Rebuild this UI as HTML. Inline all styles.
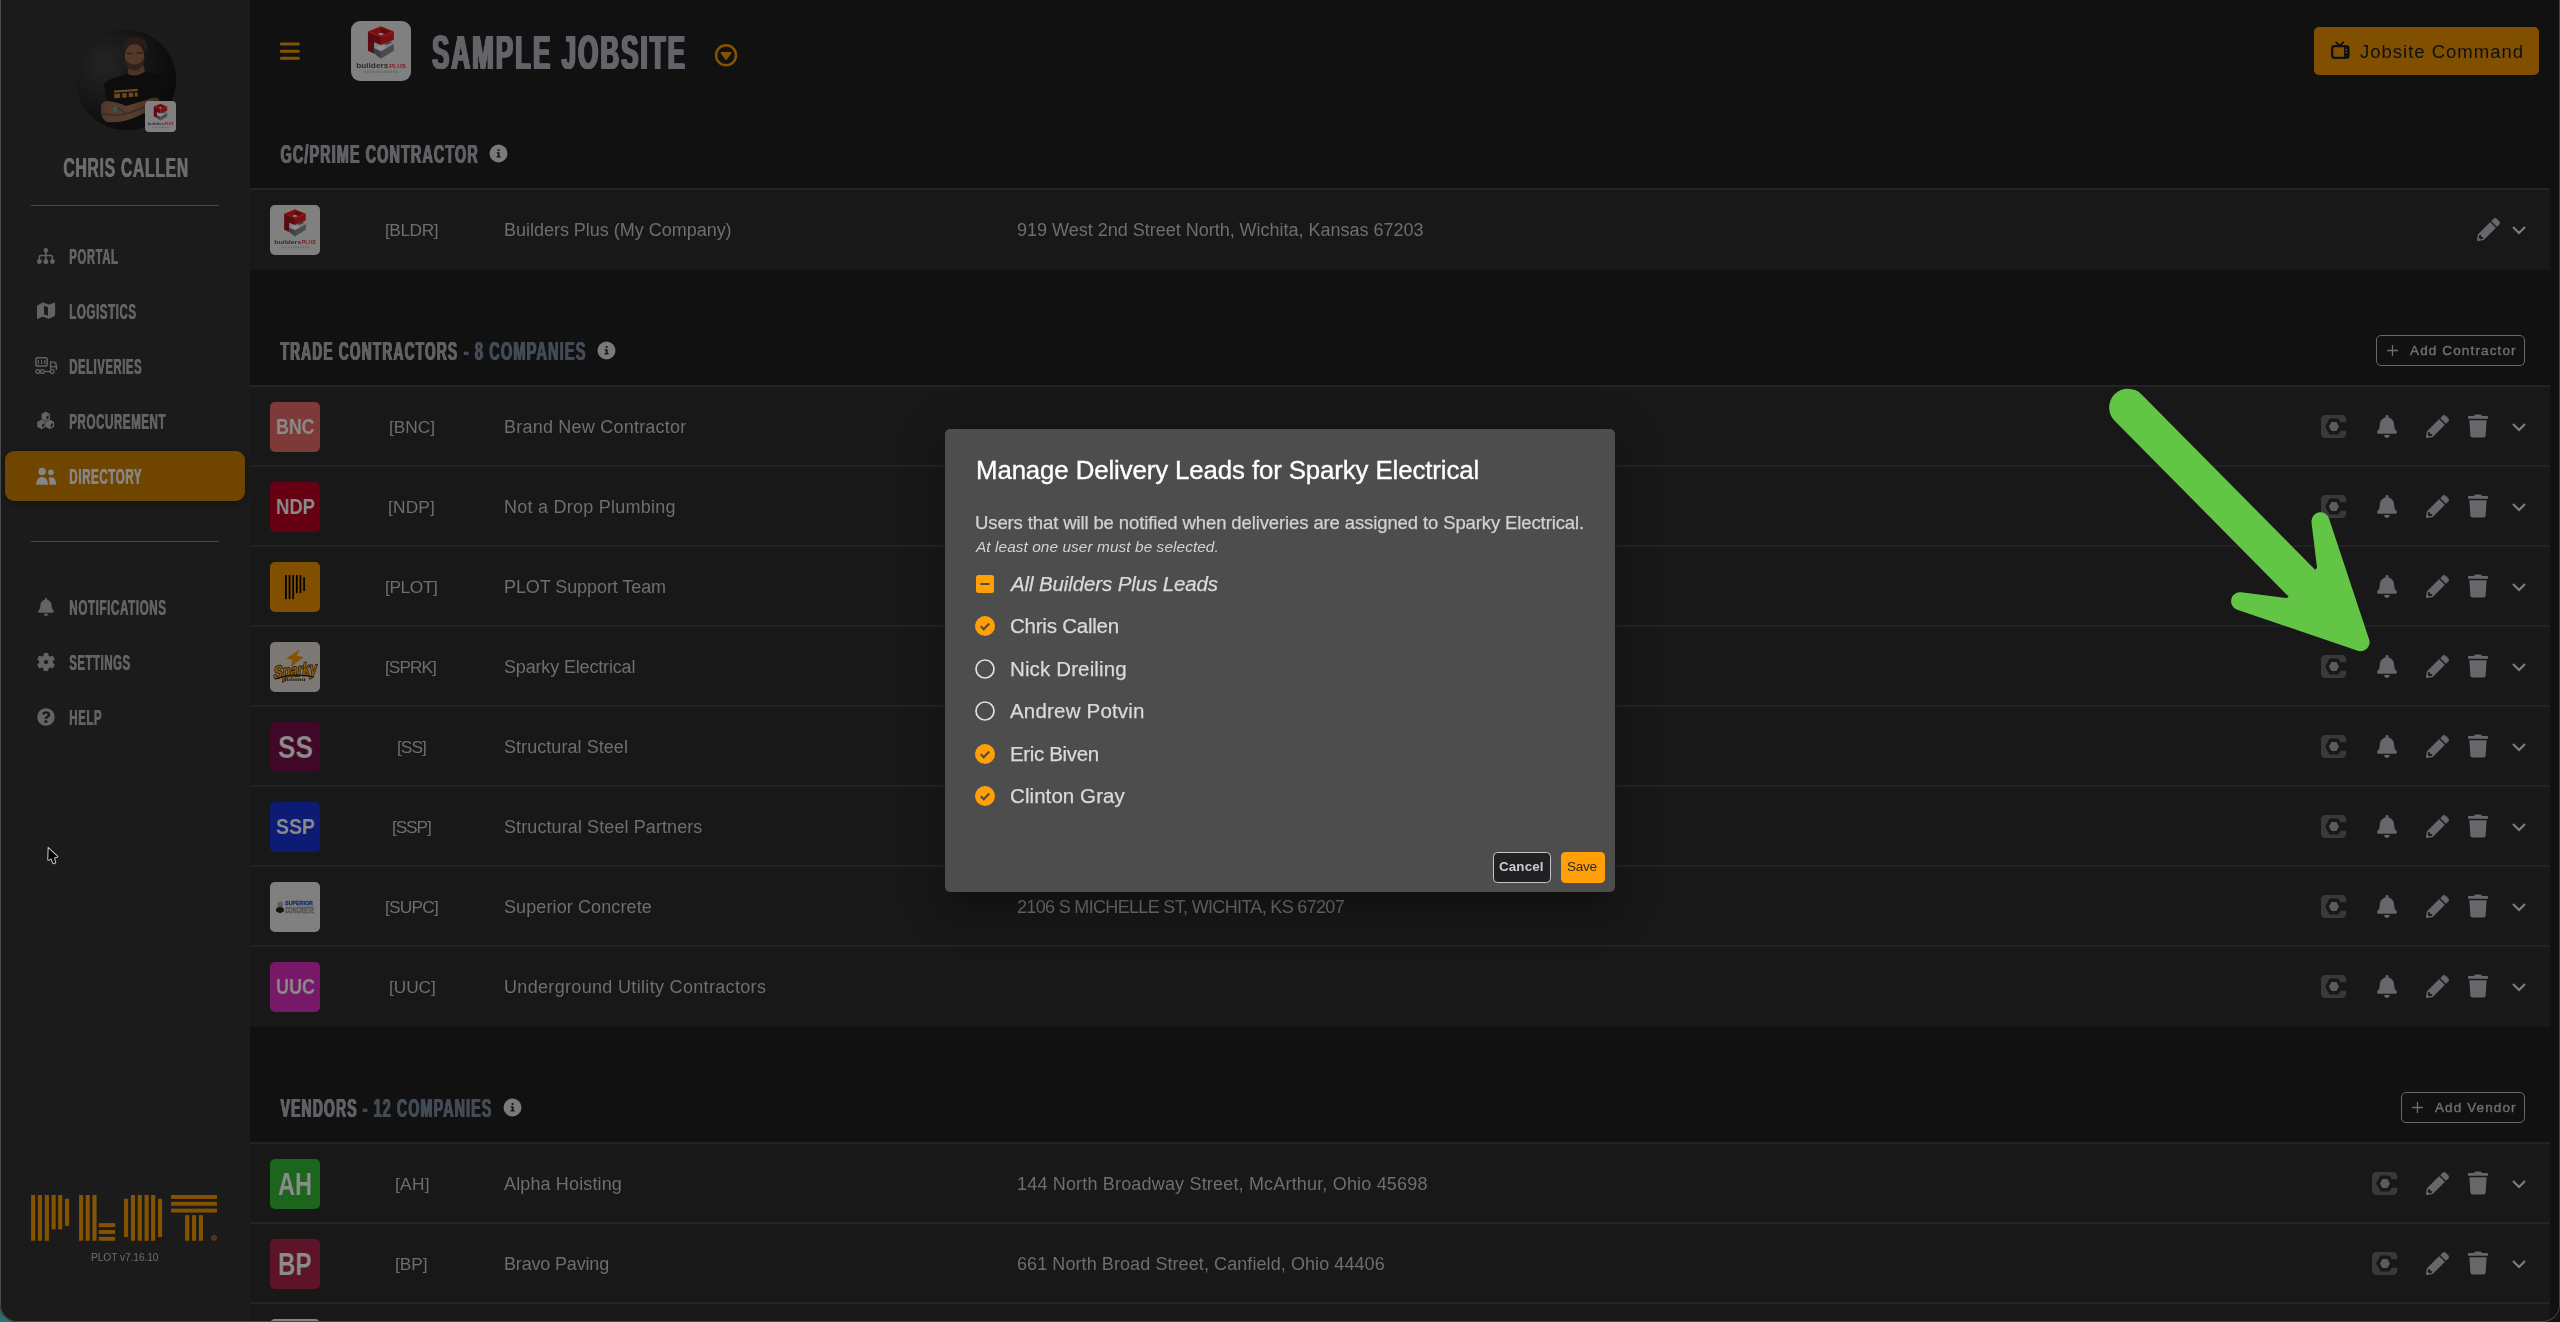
<!DOCTYPE html><html><head><meta charset="utf-8"><title>Directory</title><style>html,body{margin:0;padding:0;background:#0d1413;}body{width:2560px;height:1322px;position:relative;overflow:hidden;font-family:"Liberation Sans",sans-serif;}</style></head><body>
<div style="position:absolute;left:0;top:1296px;width:26px;height:26px;background:linear-gradient(160deg,#3a6f6a 0%,#2a6a6c 45%,#2f7a7f 100%)"></div><div style="position:absolute;left:0;top:0;width:2560px;height:1322px;border-radius:0 0 17px 17px;overflow:hidden;background:#111">
<div style="position:absolute;left:0;top:0;width:250px;height:1322px;background:#1b1b1b"></div>
<div id="avatar" style="position:absolute;left:75.500px;top:30px;width:100px;height:100px;border-radius:50%;overflow:hidden;background:#0d0d0d"><svg width="100" height="100" viewBox="0 0 100 100" style="position:absolute;left:0;top:0"><defs><radialGradient id="avbg" cx="0.28" cy="0.34" r="0.75"><stop offset="0" stop-color="#242424"/><stop offset="0.45" stop-color="#181818"/><stop offset="1" stop-color="#0a0a0a"/></radialGradient><filter id="avbl" x="-10%" y="-10%" width="120%" height="120%"><feGaussianBlur stdDeviation="0.700"/></filter><linearGradient id="avarm" x1="0" y1="0" x2="1" y2="0"><stop offset="0" stop-color="#4f382b"/><stop offset="0.5" stop-color="#5a3f30"/><stop offset="1" stop-color="#3f2c22"/></linearGradient></defs><rect width="100" height="100" fill="url(#avbg)"/><g filter="url(#avbl)"><path d="M28 54 Q30 50 40 47.500 L52 43.500 Q60 47.500 69.500 41 L82 45 Q88 47 88.500 54 L86 70 L80 100 L30 100 L31 72 Z" fill="#0c0c0c"/><path d="M52.500 34 L66.500 33 L69 41.500 Q60 48 52 44 Z" fill="#4b3529"/><ellipse cx="58.500" cy="26.500" rx="9.800" ry="13" fill="#56392c"/><path d="M48.800 28 Q50 40.500 59 40.500 Q67.500 40 68.600 27 Q66 34 59 34.500 Q52 34.500 48.800 28Z" fill="#33241c"/><path d="M47.500 22 Q45.500 9 56 7 Q68 5 71 14 Q72 19 69.500 23 Q69 15.500 62 14.500 Q53 13.500 49.500 17 Q48.500 19 47.500 22Z" fill="#2a1e17"/><path d="M51 23.500 H56.500 M60.500 23 H66.500" stroke="#2e2019" stroke-width="1.300"/><path d="M38 60.500 L61.500 58.800 L61.700 61 L38.200 62.700Z" fill="#6a4a1e"/><path d="M38.200 63.800 L44 63.400 L44.300 67.800 L38.500 68.200Z M46 63.200 L50.500 62.900 L50.800 67.400 L46.300 67.700Z M52.500 62.800 L57 62.500 L57.300 67 L52.800 67.300Z M58.500 62.400 L61.500 62.200 L61.800 66.600 L58.800 66.800Z" fill="#6a4a1e"/><path d="M25 79 Q24 73 30 71 Q40 71.500 50 76 L70 70 Q79 66 82.500 68.500 Q85 72 81 77 L60 87 Q45 93.500 31 92 Q25 89.500 25 79Z" fill="url(#avarm)"/><path d="M27 84 Q45 88 66 78 L82 71" stroke="#3b2a20" stroke-width="1.400" fill="none"/><path d="M36 76.500 Q44 78 49 83" stroke="#3b2a20" stroke-width="1.200" fill="none"/><rect x="36.800" y="76.500" width="4.200" height="5.200" rx="1" fill="#2f5b57" transform="rotate(-15 39 79)"/></g></svg></div>
<div style="position:absolute;left:145px;top:101px;width:31px;height:31px;border-radius:4px;background:#808080;overflow:hidden;will-change:transform"><svg width="31" height="31" viewBox="0 0 50 50" style="position:absolute;left:0;top:0"><polygon points="14.12,8.83 24.93,4.32 35.75,8.83 24.93,13.46" fill="#8a1010"/><polygon points="24.93,5.47 32.97,8.69 27.67,10.90 24.93,9.80" fill="#5c0a12"/><polygon points="16.90,8.69 24.93,5.47 24.93,9.80 22.29,10.90" fill="#7a0e10"/><polygon points="22.29,10.90 24.93,9.80 27.67,10.90 24.93,11.92" fill="#8c8c8c"/><polygon points="14.12,8.83 24.93,13.46 24.93,20.08 19.20,17.74 19.20,27.01 14.12,24.80" fill="#5c0a12"/><polygon points="24.93,13.46 35.75,8.83 35.75,15.53 24.93,20.08" fill="#7d0f10"/><polygon points="19.20,22.51 24.93,20.21 30.67,22.51 24.93,25.24" fill="#8e8e8e"/><polygon points="27.58,19.06 32.35,16.86 34.29,17.74 29.52,19.95" fill="#34414b"/><polygon points="19.20,22.51 24.93,25.24 24.93,31.55 19.20,27.01" fill="#3c4148"/><polygon points="24.93,25.24 35.75,19.06 35.75,24.80 24.93,31.55" fill="#4c4c4c"/><text x="4.300" y="39.050" font-family="Liberation Sans" font-weight="bold" font-size="6" fill="#2b2b30" textLength="26.800" lengthAdjust="spacingAndGlyphs">builders</text><text x="31.800" y="39.050" font-family="Liberation Sans" font-weight="bold" font-size="4.600" fill="#8a1218" textLength="13.900" lengthAdjust="spacingAndGlyphs">PLUS</text><path d="M11 42.400H39.300" stroke="#6a6a6a" stroke-width="1.900" stroke-dasharray="1.500 0.900"/></svg></div>
<div style="position:absolute;left:62.50px;top:153.77px;font-size:27.33px;line-height:1;font-weight:bold;color:#6c6c6c;white-space:nowrap;transform-origin:0 50%;will-change:transform;transform:scaleX(0.5759);letter-spacing:1.21px;text-shadow:0.60px 0 0 #6c6c6c,1.21px 0 0 #6c6c6c;">CHRIS CALLEN</div>
<div style="position:absolute;left:31px;top:205px;width:188px;height:1px;background:#484848"></div>
<div style="position:absolute;left:31px;top:541px;width:188px;height:1px;background:#484848"></div>
<div style="position:absolute;left:5px;top:451px;width:240px;height:50px;border-radius:9px;background:#704500;box-shadow:0 2px 6px rgba(0,0,0,.35)"></div>
<div style="position:absolute;left:68.80px;top:247.26px;font-size:21.37px;line-height:1;font-weight:bold;color:#636363;white-space:nowrap;transform-origin:0 50%;will-change:transform;transform:scaleX(0.5296);letter-spacing:1.14px;text-shadow:0.57px 0 0 #636363,1.14px 0 0 #636363;">PORTAL</div>
<svg style="position:absolute;left:37px;top:248px;" width="18" height="17" viewBox="0 0 18 17" fill="#636363"><circle cx="8.850" cy="2.300" r="2.200"/><rect x="0" y="11.200" width="4.700" height="4.700" rx="2.100"/><rect x="6.500" y="11.200" width="4.700" height="4.700" rx="1.700"/><rect x="13.100" y="11.200" width="4.700" height="4.700" rx="2.100"/><path d="M8.850 3V12M2.350 12V8.900Q2.350 7.400 3.850 7.400H13.900Q15.400 7.400 15.400 8.900V12" fill="none" stroke="#636363" stroke-width="1.550"/></svg>
<div style="position:absolute;left:68.80px;top:301.76px;font-size:21.37px;line-height:1;font-weight:bold;color:#636363;white-space:nowrap;transform-origin:0 50%;will-change:transform;transform:scaleX(0.5395);letter-spacing:1.07px;text-shadow:0.53px 0 0 #636363,1.07px 0 0 #636363;">LOGISTICS</div>
<svg style="position:absolute;left:37px;top:302px;" width="19" height="18" viewBox="0 0 19 18" fill="#636363"><path fill-rule="evenodd" d="M0 16.300V4.200Q0 3.500 0.600 3.200L5.300 0.650Q5.800 0.400 6.300 0.600L11.500 2.500Q11.900 2.650 12.300 2.500L17.300 0.650Q18.100 0.400 18.100 1.200V13.100Q18.100 13.700 17.500 14L12.600 16.600Q12.100 16.900 11.600 16.700L6.300 14.750Q5.800 14.600 5.300 14.800L0.800 16.800Q0 17.100 0 16.300ZM7 3.700V12.400L11 13.850V5.150Z"/></svg>
<div style="position:absolute;left:68.80px;top:356.76px;font-size:21.37px;line-height:1;font-weight:bold;color:#636363;white-space:nowrap;transform-origin:0 50%;will-change:transform;transform:scaleX(0.5253);letter-spacing:1.17px;text-shadow:0.59px 0 0 #636363,1.17px 0 0 #636363;">DELIVERIES</div>
<svg style="position:absolute;left:35px;top:357px;stroke:#636363" width="23" height="19" viewBox="0 0 23 19" ><rect x="0.850" y="0.850" width="11.300" height="8.100" rx="1.800" fill="none" stroke-width="1.500"/><path d="M3.350 2.900v4.100M6.550 2.900v4.100M9.750 2.900v4.100" stroke-width="1.200" fill="none"/><path d="M15.600 12.600V4.900H18.300Q21.400 5.600 21.400 9V13" fill="none" stroke-width="1.400"/><path d="M15.600 9.700H21.400" fill="none" stroke-width="1.300"/><circle cx="2.750" cy="14.550" r="1.900" fill="none" stroke-width="1.300"/><circle cx="7.350" cy="14.550" r="1.900" fill="none" stroke-width="1.300"/><circle cx="17.200" cy="14.550" r="1.900" fill="none" stroke-width="1.300"/><path d="M9.300 14.550H15.200" fill="none" stroke-width="1.300"/></svg>
<div style="position:absolute;left:68.80px;top:411.76px;font-size:21.37px;line-height:1;font-weight:bold;color:#636363;white-space:nowrap;transform-origin:0 50%;will-change:transform;transform:scaleX(0.5415);letter-spacing:1.05px;text-shadow:0.53px 0 0 #636363,1.05px 0 0 #636363;">PROCUREMENT</div>
<svg style="position:absolute;left:36px;top:410px;" width="20" height="21" viewBox="0 0 20 21" ><polygon points="9.75,2.35 13.34,4.42 13.34,8.57 9.75,10.65 6.16,8.57 6.16,4.42" fill="#636363" stroke="#636363" stroke-width="1.300" stroke-linejoin="round"/><polygon points="5.45,10.25 9.04,12.32 9.04,16.48 5.45,18.55 1.86,16.48 1.86,12.32" fill="#636363" stroke="#636363" stroke-width="1.300" stroke-linejoin="round"/><polygon points="13.90,10.25 17.49,12.32 17.49,16.48 13.90,18.55 10.31,16.48 10.31,12.32" fill="#636363" stroke="#636363" stroke-width="1.300" stroke-linejoin="round"/><polygon points="10.45,6.85 12.70,5.05 12.70,7.85 10.45,9.65" fill="#1b1b1b"/><polygon points="6.15,14.75 8.40,12.95 8.40,15.75 6.15,17.55" fill="#1b1b1b"/><polygon points="14.60,14.75 16.85,12.95 16.85,15.75 14.60,17.55" fill="#1b1b1b"/></svg>
<div style="position:absolute;left:68.80px;top:466.76px;font-size:21.37px;line-height:1;font-weight:bold;color:#858585;white-space:nowrap;transform-origin:0 50%;will-change:transform;transform:scaleX(0.5443);letter-spacing:1.03px;text-shadow:0.52px 0 0 #858585,1.03px 0 0 #858585;">DIRECTORY</div>
<svg style="position:absolute;left:36px;top:467px;" width="21" height="19" viewBox="0 0 21 19" fill="#858585"><circle cx="6.100" cy="4.400" r="3.750"/><circle cx="14.900" cy="5.350" r="2.900"/><path d="M0.200 17.700Q0 16.500 0.400 15C1.200 11.500 3.500 9.900 6 9.900C8.700 9.900 10.900 11.500 11.700 15Q12.100 16.500 11.900 17.700Z"/><path d="M12.400 10.900C13.200 10.400 14.200 10.200 15.100 10.200C17.800 10.200 19.400 12 19.900 15Q20.100 16.600 19.900 17.700H13.300C13.600 15.500 13.400 12.800 12.400 10.900Z"/></svg>
<div style="position:absolute;left:68.80px;top:597.76px;font-size:21.37px;line-height:1;font-weight:bold;color:#636363;white-space:nowrap;transform-origin:0 50%;will-change:transform;transform:scaleX(0.5483);letter-spacing:1.00px;text-shadow:0.50px 0 0 #636363,1.00px 0 0 #636363;">NOTIFICATIONS</div>
<svg style="position:absolute;left:38px;top:598.0px;" width="16" height="18" viewBox="0 0 448 512" fill="#636363"><path d="M224 512c35.3 0 64-28.7 64-64H160c0 35.300 28.700 64 64 64zm215.400-149.700C420 341.500 383.800 310.200 383.800 208c0-77.700-54.500-139.900-127.900-155.200V32c0-17.700-14.300-32-32-32s-32 14.300-32 32v20.800C118.600 68.100 64.100 130.300 64.100 208c0 102.200-36.200 133.500-55.500 154.300-6 6.500-8.700 14.200-8.600 21.700.1 16.400 13 32 32.100 32h383.800c19.100 0 32-15.600 32.100-32 .1-7.500-2.600-15.200-8.600-21.700z"/></svg>
<div style="position:absolute;left:68.80px;top:652.76px;font-size:21.37px;line-height:1;font-weight:bold;color:#636363;white-space:nowrap;transform-origin:0 50%;will-change:transform;transform:scaleX(0.5294);letter-spacing:1.14px;text-shadow:0.57px 0 0 #636363,1.14px 0 0 #636363;">SETTINGS</div>
<svg style="position:absolute;left:37px;top:653.0px;" width="18" height="18" viewBox="0 0 18 18" fill="#636363"><path fill-rule="evenodd" stroke-linejoin="round" stroke-width="1.2" stroke="#636363" d="M6.96 3.04 L7.38 0.55 L10.62 0.55 L11.04 3.04 L13.14 4.25 L15.50 3.37 L17.13 6.18 L15.18 7.79 L15.18 10.21 L17.13 11.82 L15.50 14.63 L13.14 13.75 L11.04 14.96 L10.62 17.45 L7.38 17.45 L6.96 14.96 L4.86 13.75 L2.50 14.63 L0.87 11.82 L2.82 10.21 L2.82 7.79 L0.87 6.18 L2.50 3.37 L4.86 4.25Z M11.70 9.00 A2.7 2.7 0 1 0 6.30 9.00 A2.7 2.7 0 1 0 11.70 9.00Z"/></svg>
<div style="position:absolute;left:68.80px;top:707.76px;font-size:21.37px;line-height:1;font-weight:bold;color:#636363;white-space:nowrap;transform-origin:0 50%;will-change:transform;transform:scaleX(0.5363);letter-spacing:1.09px;text-shadow:0.55px 0 0 #636363,1.09px 0 0 #636363;">HELP</div>
<svg style="position:absolute;left:37px;top:708.0px;" width="18" height="18" viewBox="0 0 512 512" fill="#636363"><path d="M504 256c0 137-111 248-248 248S8 393 8 256 119 8 256 8s248 111 248 248zM262.700 90c-54.500 0-89.300 23-116.500 63.800-3.500 5.300-2.400 12.400 2.700 16.300l34.700 26.300c5.200 3.900 12.600 3 16.700-2.100 17.900-22.700 30.100-35.800 57.300-35.800 20.400 0 45.700 13.100 45.700 33 0 15-12.400 22.700-32.500 34C247.100 238.500 216 254.900 216 296v4c0 6.600 5.400 12 12 12h56c6.600 0 12-5.400 12-12v-1.300c0-28.500 83.200-29.600 83.200-106.700 0-58-60.200-102-116.500-102zM256 338c-25.400 0-46 20.600-46 46s20.600 46 46 46 46-20.600 46-46-20.600-46-46-46z"/></svg>
<svg id="plotlogo" style="position:absolute;left:31px;top:1195px" width="190" height="48" viewBox="0 0 190 48"><rect x="0.08" y="0.00" width="4.10" height="45.78" fill="#855300"/><rect x="6.89" y="0.00" width="4.10" height="45.78" fill="#855300"/><rect x="13.78" y="0.00" width="4.10" height="45.78" fill="#855300"/><rect x="20.59" y="0.00" width="4.10" height="34.29" fill="#855300"/><rect x="27.15" y="0.00" width="4.10" height="34.29" fill="#855300"/><rect x="33.96" y="3.77" width="4.10" height="27.07" fill="#855300"/><rect x="48.07" y="0.00" width="4.10" height="45.78" fill="#855300"/><rect x="54.63" y="0.00" width="4.10" height="45.78" fill="#855300"/><rect x="61.44" y="0.00" width="4.10" height="45.78" fill="#855300"/><rect x="67.76" y="28.14" width="16.41" height="3.94" fill="#855300"/><rect x="67.76" y="34.95" width="16.41" height="3.94" fill="#855300"/><rect x="67.76" y="41.84" width="16.41" height="3.94" fill="#855300"/><rect x="93.03" y="3.77" width="4.10" height="38.31" fill="#855300"/><rect x="126.99" y="3.77" width="4.10" height="38.31" fill="#855300"/><rect x="99.92" y="0.00" width="4.10" height="45.78" fill="#855300"/><rect x="106.73" y="0.00" width="4.10" height="45.78" fill="#855300"/><rect x="113.54" y="0.00" width="4.10" height="45.78" fill="#855300"/><rect x="120.10" y="0.00" width="4.10" height="45.78" fill="#855300"/><rect x="140.11" y="0.00" width="45.94" height="3.94" fill="#855300"/><rect x="140.11" y="6.81" width="45.94" height="3.94" fill="#855300"/><rect x="140.11" y="13.62" width="45.94" height="3.94" fill="#855300"/><rect x="154.14" y="20.18" width="4.10" height="25.59" fill="#855300"/><rect x="161.03" y="20.18" width="4.10" height="25.59" fill="#855300"/><rect x="167.84" y="20.18" width="4.10" height="25.59" fill="#855300"/><circle cx="183.02" cy="42.90" r="2.300" fill="none" stroke="#855300" stroke-width="1"/><circle cx="183.02" cy="42.90" r="0.900" fill="#855300"/></svg>
<div style="position:absolute;top:1253.07px;font-size:10.2px;line-height:1;color:#6f6f6f;white-space:nowrap;will-change:transform;letter-spacing:-0.07px;left:91.0px;">PLOT v7.16.10</div>
<svg style="position:absolute;left:44px;top:844px" width="18" height="24" viewBox="44 844 18 24"><path d="M48.160 847.400L47.750 859.700Q48.300 860.600 49.320 860.150L51 858.900L52.550 862.700Q53.200 864.200 54.600 863.600Q56.100 863 55.700 861.800L54.450 857.950L57.100 857.200Q58.300 856.600 57.500 856.200Z" fill="#000" stroke="#c4c4c4" stroke-width="1.050" stroke-linejoin="round"/></svg>
<div style="position:absolute;left:250px;top:0;width:2310px;height:1322px;background:#111111"></div>
<svg style="position:absolute;left:278px;top:40px" width="24" height="22" viewBox="278 40 24 22"><path d="M281.300 44.100H298.400M281.300 51.150H298.400M281.300 58.200H298.400" stroke="#855300" stroke-width="3" stroke-linecap="round"/></svg>
<div style="position:absolute;left:351px;top:21px;width:60px;height:60px;border-radius:9px;background:#808080;overflow:hidden;will-change:transform"><svg width="60" height="60" viewBox="0 0 50 50" style="position:absolute;left:0;top:0"><polygon points="14.12,8.83 24.93,4.32 35.75,8.83 24.93,13.46" fill="#8a1010"/><polygon points="24.93,5.47 32.97,8.69 27.67,10.90 24.93,9.80" fill="#5c0a12"/><polygon points="16.90,8.69 24.93,5.47 24.93,9.80 22.29,10.90" fill="#7a0e10"/><polygon points="22.29,10.90 24.93,9.80 27.67,10.90 24.93,11.92" fill="#8c8c8c"/><polygon points="14.12,8.83 24.93,13.46 24.93,20.08 19.20,17.74 19.20,27.01 14.12,24.80" fill="#5c0a12"/><polygon points="24.93,13.46 35.75,8.83 35.75,15.53 24.93,20.08" fill="#7d0f10"/><polygon points="19.20,22.51 24.93,20.21 30.67,22.51 24.93,25.24" fill="#8e8e8e"/><polygon points="27.58,19.06 32.35,16.86 34.29,17.74 29.52,19.95" fill="#34414b"/><polygon points="19.20,22.51 24.93,25.24 24.93,31.55 19.20,27.01" fill="#3c4148"/><polygon points="24.93,25.24 35.75,19.06 35.75,24.80 24.93,31.55" fill="#4c4c4c"/><text x="4.300" y="39.050" font-family="Liberation Sans" font-weight="bold" font-size="6" fill="#2b2b30" textLength="26.800" lengthAdjust="spacingAndGlyphs">builders</text><text x="31.800" y="39.050" font-family="Liberation Sans" font-weight="bold" font-size="4.600" fill="#8a1218" textLength="13.900" lengthAdjust="spacingAndGlyphs">PLUS</text><path d="M11 42.400H39.300" stroke="#6a6a6a" stroke-width="1.900" stroke-dasharray="1.500 0.900"/></svg></div>
<div style="position:absolute;left:431.00px;top:28.76px;font-size:47.24px;line-height:1;font-weight:bold;color:#636469;white-space:nowrap;transform-origin:0 50%;will-change:transform;transform:scaleX(0.5475);letter-spacing:3.83px;text-shadow:0.64px 0 0 #636469,1.28px 0 0 #636469,1.92px 0 0 #636469,2.56px 0 0 #636469,3.19px 0 0 #636469,3.83px 0 0 #636469;">SAMPLE JOBSITE</div>
<svg style="position:absolute;left:712px;top:41px" width="28" height="28" viewBox="712 41 28 28"><circle cx="726.050" cy="55.250" r="9.950" fill="none" stroke="#855300" stroke-width="2.500"/><path d="M721.300 52.800H730.900L726.050 59.300Z" fill="#855300" stroke="#855300" stroke-width="1.400" stroke-linejoin="round"/></svg>
<div style="position:absolute;left:2314px;top:27px;width:225px;height:48px;border-radius:5px;background:#805000"></div>
<svg style="position:absolute;left:2331px;top:41px" width="19" height="19" viewBox="0 0 19 19"><path d="M5.300 1.300l3.400 3.500 3.500-3.500" fill="none" stroke="#0f1014" stroke-width="1.900" stroke-linecap="round"/><rect x="1.200" y="5.200" width="16.300" height="11.600" rx="2.400" fill="none" stroke="#0f1014" stroke-width="2.300"/><rect x="13" y="6" width="4.500" height="10" fill="#0f1014"/><rect x="14.300" y="8" width="1.800" height="1.300" fill="#805000"/><rect x="14.300" y="10.800" width="1.800" height="1.300" fill="#805000"/></svg>
<div style="position:absolute;top:43.20px;font-size:18.5px;line-height:1;color:#0f1014;white-space:nowrap;will-change:transform;letter-spacing:0.992px;left:2360.0px;">Jobsite Command</div>
<div style="position:absolute;left:279.80px;top:142.20px;font-size:25.87px;line-height:1;font-weight:bold;color:#5f6165;white-space:nowrap;transform-origin:0 50%;will-change:transform;transform:scaleX(0.5559);letter-spacing:2.01px;text-shadow:0.67px 0 0 #5f6165,1.34px 0 0 #5f6165,2.01px 0 0 #5f6165;">GC/PRIME CONTRACTOR</div>
<svg style="position:absolute;left:489.3px;top:144.3px;" width="19" height="19" viewBox="0 0 19 19" ><circle cx="9.500" cy="9.500" r="9" fill="#7a7a7a"/><circle cx="9.600" cy="6.100" r="1.150" fill="#151515"/><path d="M7.700 8.200H10.600V12.300H11.700V13.500H7.500V12.300H8.700V9.400H7.700Z" fill="#151515"/></svg>
<div style="position:absolute;left:279.80px;top:339.20px;font-size:25.87px;line-height:1;font-weight:bold;color:#5f6165;white-space:nowrap;transform-origin:0 50%;will-change:transform;transform:scaleX(0.5287);letter-spacing:2.30px;text-shadow:0.57px 0 0 #5f6165,1.15px 0 0 #5f6165,1.72px 0 0 #5f6165,2.30px 0 0 #5f6165;">TRADE CONTRACTORS</div>
<div style="position:absolute;left:457.50px;top:339.20px;font-size:25.87px;line-height:1;font-weight:bold;color:#434b55;white-space:nowrap;transform-origin:0 50%;will-change:transform;transform:scaleX(0.5659);letter-spacing:1.92px;text-shadow:0.64px 0 0 #434b55,1.28px 0 0 #434b55,1.92px 0 0 #434b55;white-space:pre;"> - 8 COMPANIES</div>
<svg style="position:absolute;left:597.0px;top:341.3px;" width="19" height="19" viewBox="0 0 19 19" ><circle cx="9.500" cy="9.500" r="9" fill="#7a7a7a"/><circle cx="9.600" cy="6.100" r="1.150" fill="#151515"/><path d="M7.700 8.200H10.600V12.300H11.700V13.500H7.500V12.300H8.700V9.400H7.700Z" fill="#151515"/></svg>
<div style="position:absolute;left:279.80px;top:1096.20px;font-size:25.87px;line-height:1;font-weight:bold;color:#5f6165;white-space:nowrap;transform-origin:0 50%;will-change:transform;transform:scaleX(0.5388);letter-spacing:2.19px;text-shadow:0.55px 0 0 #5f6165,1.09px 0 0 #5f6165,1.64px 0 0 #5f6165,2.19px 0 0 #5f6165;">VENDORS</div>
<div style="position:absolute;left:357.00px;top:1096.20px;font-size:25.87px;line-height:1;font-weight:bold;color:#434b55;white-space:nowrap;transform-origin:0 50%;will-change:transform;transform:scaleX(0.5521);letter-spacing:2.05px;text-shadow:0.68px 0 0 #434b55,1.37px 0 0 #434b55,2.05px 0 0 #434b55;white-space:pre;"> - 12 COMPANIES</div>
<svg style="position:absolute;left:503.29999999999995px;top:1098.3px;" width="19" height="19" viewBox="0 0 19 19" ><circle cx="9.500" cy="9.500" r="9" fill="#7a7a7a"/><circle cx="9.600" cy="6.100" r="1.150" fill="#151515"/><path d="M7.700 8.200H10.600V12.300H11.700V13.500H7.500V12.300H8.700V9.400H7.700Z" fill="#151515"/></svg>
<div style="position:absolute;left:2376px;top:335px;width:149px;height:31px;box-sizing:border-box;border:1px solid #686868;border-radius:5px"></div>
<svg style="position:absolute;left:2386.9px;top:344.6px" width="11" height="11" viewBox="0 0 11 11"><path d="M5.500 0V11M0 5.500H11" stroke="#6e6e6e" stroke-width="1.300"/></svg>
<div style="position:absolute;top:343.62px;font-size:13.5px;line-height:1;color:#707070;white-space:nowrap;will-change:transform;letter-spacing:1.139px;left:2409.8px;-webkit-text-stroke:0.400px #707070;">Add Contractor</div>
<div style="position:absolute;left:2401px;top:1092px;width:124px;height:31px;box-sizing:border-box;border:1px solid #686868;border-radius:5px"></div>
<svg style="position:absolute;left:2411.9px;top:1101.6px" width="11" height="11" viewBox="0 0 11 11"><path d="M5.500 0V11M0 5.500H11" stroke="#6e6e6e" stroke-width="1.300"/></svg>
<div style="position:absolute;top:1100.62px;font-size:13.5px;line-height:1;color:#707070;white-space:nowrap;will-change:transform;letter-spacing:1.118px;left:2434.8px;-webkit-text-stroke:0.400px #707070;">Add Vendor</div>
<div style="position:absolute;left:250px;top:188px;width:2300px;height:82px;box-sizing:border-box;border-top:2px solid #232323;background:#181818"></div>
<div style="position:absolute;left:270px;top:205px;width:50px;height:50px;border-radius:5px;background:#808080;overflow:hidden;will-change:transform"><svg width="50" height="50" viewBox="0 0 50 50" style="position:absolute;left:0;top:0"><polygon points="14.12,8.83 24.93,4.32 35.75,8.83 24.93,13.46" fill="#8a1010"/><polygon points="24.93,5.47 32.97,8.69 27.67,10.90 24.93,9.80" fill="#5c0a12"/><polygon points="16.90,8.69 24.93,5.47 24.93,9.80 22.29,10.90" fill="#7a0e10"/><polygon points="22.29,10.90 24.93,9.80 27.67,10.90 24.93,11.92" fill="#8c8c8c"/><polygon points="14.12,8.83 24.93,13.46 24.93,20.08 19.20,17.74 19.20,27.01 14.12,24.80" fill="#5c0a12"/><polygon points="24.93,13.46 35.75,8.83 35.75,15.53 24.93,20.08" fill="#7d0f10"/><polygon points="19.20,22.51 24.93,20.21 30.67,22.51 24.93,25.24" fill="#8e8e8e"/><polygon points="27.58,19.06 32.35,16.86 34.29,17.74 29.52,19.95" fill="#34414b"/><polygon points="19.20,22.51 24.93,25.24 24.93,31.55 19.20,27.01" fill="#3c4148"/><polygon points="24.93,25.24 35.75,19.06 35.75,24.80 24.93,31.55" fill="#4c4c4c"/><text x="4.300" y="39.050" font-family="Liberation Sans" font-weight="bold" font-size="6" fill="#2b2b30" textLength="26.800" lengthAdjust="spacingAndGlyphs">builders</text><text x="31.800" y="39.050" font-family="Liberation Sans" font-weight="bold" font-size="4.600" fill="#8a1218" textLength="13.900" lengthAdjust="spacingAndGlyphs">PLUS</text><path d="M11 42.400H39.300" stroke="#6a6a6a" stroke-width="1.900" stroke-dasharray="1.500 0.900"/></svg></div>
<div style="position:absolute;top:221.51px;font-size:17.3px;line-height:1;color:#6c6e73;white-space:nowrap;will-change:transform;letter-spacing:-0.438px;left:384.7px;">[BLDR]</div>
<div style="position:absolute;top:221.15px;font-size:18px;line-height:1;color:#6c6e73;white-space:nowrap;will-change:transform;letter-spacing:-0.018px;left:503.6px;">Builders Plus (My Company)</div>
<div style="position:absolute;top:221.15px;font-size:18px;line-height:1;color:#6c6e73;white-space:nowrap;will-change:transform;letter-spacing:-0.006px;left:1016.6px;">919 West 2nd Street North, Wichita, Kansas 67203</div>
<svg style="position:absolute;left:2476.5px;top:218px;" width="23" height="23" viewBox="0 0 512 512" fill="#66676b"><path d="M497.900 142.100l-46.100 46.100c-4.700 4.700-12.300 4.700-17 0l-111-111c-4.700-4.700-4.700-12.300 0-17l46.100-46.100c18.700-18.700 49.100-18.700 67.900 0l60.100 60.100c18.800 18.700 18.800 49.100 0 67.900zM284.200 99.800L21.600 362.400.4 483.900c-2.900 16.400 11.400 30.600 27.800 27.800l121.500-21.300 262.600-262.600c4.700-4.700 4.700-12.300 0-17l-111-111c-4.800-4.700-12.400-4.700-17.100 0zM88 424h48v36.300l-64.500 11.300-31.100-31.100L51.700 376H88v48z"/></svg>
<svg style="position:absolute;left:2510.8px;top:225px;stroke:#7d7d7d" width="16" height="11" viewBox="0 0 16 11" ><path d="M2 2 L8 8 L14 2" fill="none" stroke-width="2.2" stroke-linecap="butt" stroke-linejoin="miter"/></svg>
<div style="position:absolute;left:250px;top:385px;width:2300px;height:80px;box-sizing:border-box;border-top:2px solid #232323;background:#181818"></div>
<div style="position:absolute;left:270px;top:402px;width:50px;height:50px;border-radius:5px;background:#7d3a38"></div><div style="position:absolute;left:275.95px;top:416.15px;font-size:22.38px;line-height:1;font-weight:bold;color:#8a8b8b;white-space:nowrap;transform-origin:0 50%;transform:scaleX(0.7939);will-change:transform">BNC</div>
<div style="position:absolute;top:418.51px;font-size:17.3px;line-height:1;color:#6c6e73;white-space:nowrap;will-change:transform;letter-spacing:-0.001px;left:388.6px;">[BNC]</div>
<div style="position:absolute;top:418.15px;font-size:18px;line-height:1;color:#6c6e73;white-space:nowrap;will-change:transform;letter-spacing:0.221px;left:503.6px;">Brand New Contractor</div>
<svg style="position:absolute;left:2321px;top:415px" width="26" height="23" viewBox="0 0 26 23"><rect x="0" y="0" width="25.200" height="23" rx="4.500" fill="#393939"/><path d="M26 7.300 H19.600 L17.400 3.600 H8.600 L4 11.500 L8.600 19.400 H17.400 L19.600 15.700 H26 Z" fill="#181818"/><path d="M10.400 6.900 H15.400 L17.900 11.500 L15.400 16.100 H10.400 L7.900 11.500 Z" fill="#5c5c5c"/></svg>
<svg style="position:absolute;left:2377px;top:415px;" width="20" height="23" viewBox="0 0 448 512" fill="#66676b"><path d="M224 512c35.3 0 64-28.7 64-64H160c0 35.300 28.700 64 64 64zm215.400-149.700C420 341.500 383.800 310.200 383.800 208c0-77.700-54.500-139.900-127.900-155.200V32c0-17.700-14.300-32-32-32s-32 14.300-32 32v20.800C118.600 68.100 64.100 130.300 64.100 208c0 102.200-36.200 133.500-55.500 154.300-6 6.500-8.700 14.200-8.600 21.700.1 16.400 13 32 32.100 32h383.800c19.100 0 32-15.600 32.100-32 .1-7.500-2.600-15.200-8.600-21.700z"/></svg>
<svg style="position:absolute;left:2425.5px;top:415px;" width="23" height="23" viewBox="0 0 512 512" fill="#66676b"><path d="M497.900 142.100l-46.100 46.100c-4.700 4.700-12.300 4.700-17 0l-111-111c-4.700-4.700-4.700-12.300 0-17l46.100-46.100c18.700-18.700 49.100-18.700 67.900 0l60.100 60.100c18.800 18.700 18.800 49.100 0 67.900zM284.200 99.800L21.600 362.400.4 483.900c-2.900 16.400 11.400 30.600 27.800 27.800l121.500-21.300 262.600-262.600c4.700-4.700 4.700-12.300 0-17l-111-111c-4.800-4.700-12.400-4.700-17.100 0zM88 424h48v36.300l-64.500 11.300-31.100-31.100L51.700 376H88v48z"/></svg>
<svg style="position:absolute;left:2468px;top:414px;" width="20" height="24" viewBox="0 0 448 512" fill="#66676b"><path d="M432 32H312l-9.400-18.700A24 24 0 0 0 281.100 0H166.800a23.720 23.720 0 0 0-21.400 13.300L136 32H16A16 16 0 0 0 0 48v32a16 16 0 0 0 16 16h416a16 16 0 0 0 16-16V48a16 16 0 0 0-16-16zM53.200 467a48 48 0 0 0 47.900 45h245.800a48 48 0 0 0 47.900-45L416 128H32z"/></svg>
<svg style="position:absolute;left:2510.8px;top:422px;stroke:#7d7d7d" width="16" height="11" viewBox="0 0 16 11" ><path d="M2 2 L8 8 L14 2" fill="none" stroke-width="2.2" stroke-linecap="butt" stroke-linejoin="miter"/></svg>
<div style="position:absolute;left:250px;top:465px;width:2300px;height:80px;box-sizing:border-box;border-top:2px solid #232323;background:#181818"></div>
<div style="position:absolute;left:270px;top:482px;width:50px;height:50px;border-radius:5px;background:#680014"></div><div style="position:absolute;left:275.70px;top:496.15px;font-size:22.38px;line-height:1;font-weight:bold;color:#8a8b8b;white-space:nowrap;transform-origin:0 50%;transform:scaleX(0.8252);will-change:transform">NDP</div>
<div style="position:absolute;top:498.51px;font-size:17.3px;line-height:1;color:#6c6e73;white-space:nowrap;will-change:transform;letter-spacing:0.199px;left:388.2px;">[NDP]</div>
<div style="position:absolute;top:498.15px;font-size:18px;line-height:1;color:#6c6e73;white-space:nowrap;will-change:transform;letter-spacing:0.248px;left:503.6px;">Not a Drop Plumbing</div>
<svg style="position:absolute;left:2321px;top:495px" width="26" height="23" viewBox="0 0 26 23"><rect x="0" y="0" width="25.200" height="23" rx="4.500" fill="#393939"/><path d="M26 7.300 H19.600 L17.400 3.600 H8.600 L4 11.500 L8.600 19.400 H17.400 L19.600 15.700 H26 Z" fill="#181818"/><path d="M10.400 6.900 H15.400 L17.900 11.500 L15.400 16.100 H10.400 L7.900 11.500 Z" fill="#5c5c5c"/></svg>
<svg style="position:absolute;left:2377px;top:495px;" width="20" height="23" viewBox="0 0 448 512" fill="#66676b"><path d="M224 512c35.3 0 64-28.7 64-64H160c0 35.300 28.700 64 64 64zm215.400-149.700C420 341.500 383.800 310.200 383.800 208c0-77.700-54.500-139.900-127.900-155.200V32c0-17.700-14.300-32-32-32s-32 14.300-32 32v20.800C118.600 68.100 64.100 130.300 64.100 208c0 102.200-36.200 133.500-55.500 154.300-6 6.500-8.700 14.200-8.600 21.700.1 16.400 13 32 32.100 32h383.800c19.100 0 32-15.600 32.100-32 .1-7.500-2.600-15.200-8.600-21.700z"/></svg>
<svg style="position:absolute;left:2425.5px;top:495px;" width="23" height="23" viewBox="0 0 512 512" fill="#66676b"><path d="M497.900 142.100l-46.100 46.100c-4.700 4.700-12.300 4.700-17 0l-111-111c-4.700-4.700-4.700-12.300 0-17l46.100-46.100c18.700-18.700 49.100-18.700 67.900 0l60.100 60.100c18.800 18.700 18.800 49.100 0 67.900zM284.200 99.800L21.600 362.400.4 483.900c-2.900 16.400 11.400 30.600 27.800 27.800l121.500-21.300 262.600-262.600c4.700-4.700 4.700-12.300 0-17l-111-111c-4.800-4.700-12.400-4.700-17.100 0zM88 424h48v36.300l-64.500 11.300-31.100-31.100L51.700 376H88v48z"/></svg>
<svg style="position:absolute;left:2468px;top:494px;" width="20" height="24" viewBox="0 0 448 512" fill="#66676b"><path d="M432 32H312l-9.400-18.700A24 24 0 0 0 281.100 0H166.800a23.720 23.720 0 0 0-21.400 13.300L136 32H16A16 16 0 0 0 0 48v32a16 16 0 0 0 16 16h416a16 16 0 0 0 16-16V48a16 16 0 0 0-16-16zM53.200 467a48 48 0 0 0 47.900 45h245.800a48 48 0 0 0 47.900-45L416 128H32z"/></svg>
<svg style="position:absolute;left:2510.8px;top:502px;stroke:#7d7d7d" width="16" height="11" viewBox="0 0 16 11" ><path d="M2 2 L8 8 L14 2" fill="none" stroke-width="2.2" stroke-linecap="butt" stroke-linejoin="miter"/></svg>
<div style="position:absolute;left:250px;top:545px;width:2300px;height:80px;box-sizing:border-box;border-top:2px solid #232323;background:#181818"></div>
<div style="position:absolute;left:270px;top:562px;width:50px;height:50px;border-radius:5px;background:#805000"><svg width="50" height="50" viewBox="0 0 50 50"><rect x="15.05" y="13.16" width="1.750" height="24.04" fill="#050300"/><rect x="18.68" y="13.16" width="1.750" height="24.04" fill="#050300"/><rect x="22.31" y="13.16" width="1.750" height="24.04" fill="#050300"/><rect x="25.94" y="13.16" width="1.750" height="17.94" fill="#050300"/><rect x="29.57" y="13.16" width="1.750" height="17.94" fill="#050300"/><rect x="33.20" y="15.2" width="1.750" height="13.85" fill="#050300"/></svg></div>
<div style="position:absolute;top:578.51px;font-size:17.3px;line-height:1;color:#6c6e73;white-space:nowrap;will-change:transform;letter-spacing:-0.368px;left:385.0px;">[PLOT]</div>
<div style="position:absolute;top:578.15px;font-size:18px;line-height:1;color:#6c6e73;white-space:nowrap;will-change:transform;letter-spacing:-0.084px;left:503.6px;">PLOT Support Team</div>
<svg style="position:absolute;left:2377px;top:575px;" width="20" height="23" viewBox="0 0 448 512" fill="#66676b"><path d="M224 512c35.3 0 64-28.7 64-64H160c0 35.300 28.700 64 64 64zm215.400-149.700C420 341.500 383.800 310.200 383.800 208c0-77.700-54.500-139.900-127.900-155.200V32c0-17.700-14.300-32-32-32s-32 14.300-32 32v20.800C118.600 68.100 64.100 130.300 64.100 208c0 102.200-36.200 133.500-55.500 154.300-6 6.500-8.700 14.200-8.600 21.700.1 16.400 13 32 32.100 32h383.800c19.100 0 32-15.600 32.100-32 .1-7.500-2.600-15.200-8.600-21.700z"/></svg>
<svg style="position:absolute;left:2425.5px;top:575px;" width="23" height="23" viewBox="0 0 512 512" fill="#66676b"><path d="M497.900 142.100l-46.100 46.100c-4.700 4.700-12.300 4.700-17 0l-111-111c-4.700-4.700-4.700-12.300 0-17l46.100-46.100c18.700-18.700 49.100-18.700 67.900 0l60.100 60.100c18.800 18.700 18.800 49.100 0 67.900zM284.200 99.800L21.600 362.400.4 483.900c-2.900 16.400 11.400 30.600 27.800 27.800l121.500-21.300 262.600-262.600c4.700-4.700 4.700-12.300 0-17l-111-111c-4.800-4.700-12.400-4.700-17.100 0zM88 424h48v36.300l-64.500 11.300-31.100-31.100L51.700 376H88v48z"/></svg>
<svg style="position:absolute;left:2468px;top:574px;" width="20" height="24" viewBox="0 0 448 512" fill="#66676b"><path d="M432 32H312l-9.400-18.700A24 24 0 0 0 281.100 0H166.800a23.720 23.720 0 0 0-21.400 13.300L136 32H16A16 16 0 0 0 0 48v32a16 16 0 0 0 16 16h416a16 16 0 0 0 16-16V48a16 16 0 0 0-16-16zM53.200 467a48 48 0 0 0 47.900 45h245.800a48 48 0 0 0 47.900-45L416 128H32z"/></svg>
<svg style="position:absolute;left:2510.8px;top:582px;stroke:#7d7d7d" width="16" height="11" viewBox="0 0 16 11" ><path d="M2 2 L8 8 L14 2" fill="none" stroke-width="2.2" stroke-linecap="butt" stroke-linejoin="miter"/></svg>
<div style="position:absolute;left:250px;top:625px;width:2300px;height:80px;box-sizing:border-box;border-top:2px solid #232323;background:#181818"></div>
<div style="position:absolute;left:270px;top:642px;width:50px;height:50px;border-radius:5px;background:#7d7873;overflow:hidden;will-change:transform"><svg width="50" height="50" viewBox="0 0 50 50"><polygon points="29.500,7.500 16.300,16.600 22.600,18 20.500,25 33.600,15.200 26.800,13.800" fill="#845200"/><g transform="rotate(-6 25 30) skewX(-12)"><text x="10" y="34.500" font-family="Liberation Sans" font-weight="bold" font-size="18" fill="#8a5808" stroke="#19120a" stroke-width="1.500" paint-order="stroke" stroke-linejoin="round" textLength="43.500" lengthAdjust="spacingAndGlyphs">Sparky</text></g><path d="M4.500 37 Q24 30.500 44 35" stroke="#15100a" stroke-width="1.200" fill="none"/><path d="M15 37.800H35" stroke="#1a1510" stroke-width="2.500" stroke-dasharray="1 0.900"/></svg></div>
<div style="position:absolute;top:658.51px;font-size:17.3px;line-height:1;color:#6c6e73;white-space:nowrap;will-change:transform;letter-spacing:-0.949px;left:385.4px;">[SPRK]</div>
<div style="position:absolute;top:658.15px;font-size:18px;line-height:1;color:#6c6e73;white-space:nowrap;will-change:transform;letter-spacing:-0.163px;left:503.6px;">Sparky Electrical</div>
<svg style="position:absolute;left:2321px;top:655px" width="26" height="23" viewBox="0 0 26 23"><rect x="0" y="0" width="25.200" height="23" rx="4.500" fill="#393939"/><path d="M26 7.300 H19.600 L17.400 3.600 H8.600 L4 11.500 L8.600 19.400 H17.400 L19.600 15.700 H26 Z" fill="#181818"/><path d="M10.400 6.900 H15.400 L17.900 11.500 L15.400 16.100 H10.400 L7.900 11.500 Z" fill="#5c5c5c"/></svg>
<svg style="position:absolute;left:2377px;top:655px;" width="20" height="23" viewBox="0 0 448 512" fill="#66676b"><path d="M224 512c35.3 0 64-28.7 64-64H160c0 35.300 28.700 64 64 64zm215.400-149.700C420 341.500 383.800 310.200 383.800 208c0-77.700-54.500-139.900-127.900-155.200V32c0-17.700-14.300-32-32-32s-32 14.300-32 32v20.800C118.600 68.100 64.100 130.300 64.100 208c0 102.200-36.200 133.500-55.500 154.300-6 6.500-8.700 14.200-8.600 21.700.1 16.400 13 32 32.100 32h383.800c19.100 0 32-15.600 32.100-32 .1-7.500-2.600-15.200-8.600-21.700z"/></svg>
<svg style="position:absolute;left:2425.5px;top:655px;" width="23" height="23" viewBox="0 0 512 512" fill="#66676b"><path d="M497.900 142.100l-46.100 46.100c-4.700 4.700-12.300 4.700-17 0l-111-111c-4.700-4.700-4.700-12.300 0-17l46.100-46.100c18.700-18.700 49.100-18.700 67.900 0l60.100 60.100c18.800 18.700 18.800 49.100 0 67.900zM284.200 99.800L21.600 362.400.4 483.900c-2.900 16.400 11.400 30.600 27.800 27.800l121.500-21.300 262.600-262.600c4.700-4.700 4.700-12.300 0-17l-111-111c-4.800-4.700-12.400-4.700-17.100 0zM88 424h48v36.300l-64.500 11.300-31.100-31.100L51.700 376H88v48z"/></svg>
<svg style="position:absolute;left:2468px;top:654px;" width="20" height="24" viewBox="0 0 448 512" fill="#66676b"><path d="M432 32H312l-9.400-18.700A24 24 0 0 0 281.100 0H166.800a23.720 23.720 0 0 0-21.400 13.300L136 32H16A16 16 0 0 0 0 48v32a16 16 0 0 0 16 16h416a16 16 0 0 0 16-16V48a16 16 0 0 0-16-16zM53.200 467a48 48 0 0 0 47.900 45h245.800a48 48 0 0 0 47.900-45L416 128H32z"/></svg>
<svg style="position:absolute;left:2510.8px;top:662px;stroke:#7d7d7d" width="16" height="11" viewBox="0 0 16 11" ><path d="M2 2 L8 8 L14 2" fill="none" stroke-width="2.2" stroke-linecap="butt" stroke-linejoin="miter"/></svg>
<div style="position:absolute;left:250px;top:705px;width:2300px;height:80px;box-sizing:border-box;border-top:2px solid #232323;background:#181818"></div>
<div style="position:absolute;left:270px;top:722px;width:50px;height:50px;border-radius:5px;background:#400826"></div><div style="position:absolute;left:277.70px;top:731.77px;font-size:31.11px;line-height:1;font-weight:bold;color:#8a8b8b;white-space:nowrap;transform-origin:0 50%;transform:scaleX(0.8434);will-change:transform">SS</div>
<div style="position:absolute;top:738.51px;font-size:17.3px;line-height:1;color:#6c6e73;white-space:nowrap;will-change:transform;letter-spacing:-0.966px;left:396.5px;">[SS]</div>
<div style="position:absolute;top:738.15px;font-size:18px;line-height:1;color:#6c6e73;white-space:nowrap;will-change:transform;letter-spacing:0.058px;left:503.6px;">Structural Steel</div>
<svg style="position:absolute;left:2321px;top:735px" width="26" height="23" viewBox="0 0 26 23"><rect x="0" y="0" width="25.200" height="23" rx="4.500" fill="#393939"/><path d="M26 7.300 H19.600 L17.400 3.600 H8.600 L4 11.500 L8.600 19.400 H17.400 L19.600 15.700 H26 Z" fill="#181818"/><path d="M10.400 6.900 H15.400 L17.900 11.500 L15.400 16.100 H10.400 L7.900 11.500 Z" fill="#5c5c5c"/></svg>
<svg style="position:absolute;left:2377px;top:735px;" width="20" height="23" viewBox="0 0 448 512" fill="#66676b"><path d="M224 512c35.3 0 64-28.7 64-64H160c0 35.300 28.700 64 64 64zm215.400-149.700C420 341.500 383.800 310.200 383.800 208c0-77.700-54.500-139.900-127.900-155.200V32c0-17.700-14.300-32-32-32s-32 14.300-32 32v20.800C118.600 68.100 64.100 130.300 64.100 208c0 102.200-36.200 133.500-55.500 154.300-6 6.500-8.700 14.200-8.600 21.700.1 16.400 13 32 32.100 32h383.800c19.100 0 32-15.600 32.100-32 .1-7.500-2.600-15.200-8.600-21.700z"/></svg>
<svg style="position:absolute;left:2425.5px;top:735px;" width="23" height="23" viewBox="0 0 512 512" fill="#66676b"><path d="M497.900 142.100l-46.100 46.100c-4.700 4.700-12.300 4.700-17 0l-111-111c-4.700-4.700-4.700-12.300 0-17l46.100-46.100c18.700-18.700 49.100-18.700 67.900 0l60.100 60.100c18.800 18.700 18.800 49.100 0 67.900zM284.200 99.800L21.600 362.400.4 483.900c-2.900 16.400 11.400 30.600 27.800 27.800l121.500-21.300 262.600-262.600c4.700-4.700 4.700-12.300 0-17l-111-111c-4.800-4.700-12.400-4.700-17.100 0zM88 424h48v36.300l-64.500 11.300-31.100-31.100L51.700 376H88v48z"/></svg>
<svg style="position:absolute;left:2468px;top:734px;" width="20" height="24" viewBox="0 0 448 512" fill="#66676b"><path d="M432 32H312l-9.400-18.700A24 24 0 0 0 281.100 0H166.800a23.720 23.720 0 0 0-21.400 13.300L136 32H16A16 16 0 0 0 0 48v32a16 16 0 0 0 16 16h416a16 16 0 0 0 16-16V48a16 16 0 0 0-16-16zM53.200 467a48 48 0 0 0 47.900 45h245.800a48 48 0 0 0 47.900-45L416 128H32z"/></svg>
<svg style="position:absolute;left:2510.8px;top:742px;stroke:#7d7d7d" width="16" height="11" viewBox="0 0 16 11" ><path d="M2 2 L8 8 L14 2" fill="none" stroke-width="2.2" stroke-linecap="butt" stroke-linejoin="miter"/></svg>
<div style="position:absolute;left:250px;top:785px;width:2300px;height:80px;box-sizing:border-box;border-top:2px solid #232323;background:#181818"></div>
<div style="position:absolute;left:270px;top:802px;width:50px;height:50px;border-radius:5px;background:#0c1c74"></div><div style="position:absolute;left:275.70px;top:816.15px;font-size:22.38px;line-height:1;font-weight:bold;color:#8a8b8b;white-space:nowrap;transform-origin:0 50%;transform:scaleX(0.8707);will-change:transform">SSP</div>
<div style="position:absolute;top:818.51px;font-size:17.3px;line-height:1;color:#6c6e73;white-space:nowrap;will-change:transform;letter-spacing:-1.125px;left:391.6px;">[SSP]</div>
<div style="position:absolute;top:818.15px;font-size:18px;line-height:1;color:#6c6e73;white-space:nowrap;will-change:transform;letter-spacing:0.095px;left:503.6px;">Structural Steel Partners</div>
<svg style="position:absolute;left:2321px;top:815px" width="26" height="23" viewBox="0 0 26 23"><rect x="0" y="0" width="25.200" height="23" rx="4.500" fill="#393939"/><path d="M26 7.300 H19.600 L17.400 3.600 H8.600 L4 11.500 L8.600 19.400 H17.400 L19.600 15.700 H26 Z" fill="#181818"/><path d="M10.400 6.900 H15.400 L17.900 11.500 L15.400 16.100 H10.400 L7.900 11.500 Z" fill="#5c5c5c"/></svg>
<svg style="position:absolute;left:2377px;top:815px;" width="20" height="23" viewBox="0 0 448 512" fill="#66676b"><path d="M224 512c35.3 0 64-28.7 64-64H160c0 35.300 28.700 64 64 64zm215.400-149.700C420 341.500 383.800 310.200 383.800 208c0-77.700-54.500-139.900-127.900-155.200V32c0-17.700-14.300-32-32-32s-32 14.300-32 32v20.800C118.600 68.100 64.100 130.300 64.100 208c0 102.200-36.200 133.500-55.500 154.300-6 6.500-8.700 14.200-8.600 21.700.1 16.400 13 32 32.100 32h383.800c19.100 0 32-15.600 32.100-32 .1-7.500-2.600-15.200-8.600-21.700z"/></svg>
<svg style="position:absolute;left:2425.5px;top:815px;" width="23" height="23" viewBox="0 0 512 512" fill="#66676b"><path d="M497.900 142.100l-46.100 46.100c-4.700 4.700-12.300 4.700-17 0l-111-111c-4.700-4.700-4.700-12.300 0-17l46.100-46.100c18.700-18.700 49.100-18.700 67.900 0l60.100 60.100c18.800 18.700 18.800 49.100 0 67.900zM284.200 99.800L21.600 362.400.4 483.900c-2.900 16.400 11.400 30.600 27.800 27.800l121.500-21.300 262.600-262.600c4.700-4.700 4.700-12.300 0-17l-111-111c-4.800-4.700-12.400-4.700-17.100 0zM88 424h48v36.300l-64.500 11.300-31.100-31.100L51.700 376H88v48z"/></svg>
<svg style="position:absolute;left:2468px;top:814px;" width="20" height="24" viewBox="0 0 448 512" fill="#66676b"><path d="M432 32H312l-9.400-18.700A24 24 0 0 0 281.100 0H166.800a23.720 23.720 0 0 0-21.400 13.300L136 32H16A16 16 0 0 0 0 48v32a16 16 0 0 0 16 16h416a16 16 0 0 0 16-16V48a16 16 0 0 0-16-16zM53.200 467a48 48 0 0 0 47.900 45h245.800a48 48 0 0 0 47.900-45L416 128H32z"/></svg>
<svg style="position:absolute;left:2510.8px;top:822px;stroke:#7d7d7d" width="16" height="11" viewBox="0 0 16 11" ><path d="M2 2 L8 8 L14 2" fill="none" stroke-width="2.2" stroke-linecap="butt" stroke-linejoin="miter"/></svg>
<div style="position:absolute;left:250px;top:865px;width:2300px;height:80px;box-sizing:border-box;border-top:2px solid #232323;background:#181818"></div>
<div style="position:absolute;left:270px;top:882px;width:50px;height:50px;border-radius:5px;background:#808080;overflow:hidden;will-change:transform"><svg width="50" height="50" viewBox="0 0 50 50"><path d="M7.500 26 V20.500 L10.300 19.300 L12.800 20.500 V26Z" fill="#5e5e5e"/><path d="M6.100 26.500 L10 24.800 L13.800 26.500 V29.500 L10 31.200 L6.100 29.500Z" fill="#18120f"/><text x="15.200" y="23.150" font-family="Liberation Sans" font-weight="bold" font-size="5.700" fill="#17306a" stroke="#17306a" stroke-width="0.300" textLength="27.700" lengthAdjust="spacingAndGlyphs">SUPERIOR</text><text x="15.200" y="30.900" font-family="Liberation Sans" font-weight="bold" font-size="9.900" fill="#6e6e6e" stroke="#444444" stroke-width="0.550" textLength="28.600" lengthAdjust="spacingAndGlyphs">CONCRETE</text></svg></div>
<div style="position:absolute;top:898.51px;font-size:17.3px;line-height:1;color:#6c6e73;white-space:nowrap;will-change:transform;letter-spacing:-0.779px;left:384.7px;">[SUPC]</div>
<div style="position:absolute;top:898.15px;font-size:18px;line-height:1;color:#6c6e73;white-space:nowrap;will-change:transform;letter-spacing:0.108px;left:503.6px;">Superior Concrete</div>
<div style="position:absolute;top:898.15px;font-size:18px;line-height:1;color:#6c6e73;white-space:nowrap;will-change:transform;letter-spacing:-0.67px;left:1016.6px;">2106 S MICHELLE ST, WICHITA, KS 67207</div>
<svg style="position:absolute;left:2321px;top:895px" width="26" height="23" viewBox="0 0 26 23"><rect x="0" y="0" width="25.200" height="23" rx="4.500" fill="#393939"/><path d="M26 7.300 H19.600 L17.400 3.600 H8.600 L4 11.500 L8.600 19.400 H17.400 L19.600 15.700 H26 Z" fill="#181818"/><path d="M10.400 6.900 H15.400 L17.900 11.500 L15.400 16.100 H10.400 L7.900 11.500 Z" fill="#5c5c5c"/></svg>
<svg style="position:absolute;left:2377px;top:895px;" width="20" height="23" viewBox="0 0 448 512" fill="#66676b"><path d="M224 512c35.3 0 64-28.7 64-64H160c0 35.300 28.700 64 64 64zm215.400-149.700C420 341.500 383.800 310.200 383.800 208c0-77.700-54.500-139.900-127.900-155.200V32c0-17.700-14.300-32-32-32s-32 14.300-32 32v20.800C118.600 68.100 64.100 130.300 64.100 208c0 102.200-36.200 133.500-55.500 154.300-6 6.500-8.700 14.200-8.600 21.700.1 16.400 13 32 32.100 32h383.800c19.100 0 32-15.600 32.100-32 .1-7.500-2.600-15.200-8.600-21.700z"/></svg>
<svg style="position:absolute;left:2425.5px;top:895px;" width="23" height="23" viewBox="0 0 512 512" fill="#66676b"><path d="M497.900 142.100l-46.100 46.100c-4.700 4.700-12.300 4.700-17 0l-111-111c-4.700-4.700-4.700-12.300 0-17l46.100-46.100c18.700-18.700 49.100-18.700 67.900 0l60.100 60.100c18.800 18.700 18.800 49.100 0 67.900zM284.200 99.800L21.600 362.400.4 483.900c-2.900 16.400 11.400 30.600 27.800 27.800l121.500-21.300 262.600-262.600c4.700-4.700 4.700-12.300 0-17l-111-111c-4.800-4.700-12.400-4.700-17.100 0zM88 424h48v36.300l-64.500 11.300-31.100-31.100L51.700 376H88v48z"/></svg>
<svg style="position:absolute;left:2468px;top:894px;" width="20" height="24" viewBox="0 0 448 512" fill="#66676b"><path d="M432 32H312l-9.400-18.700A24 24 0 0 0 281.100 0H166.800a23.720 23.720 0 0 0-21.400 13.300L136 32H16A16 16 0 0 0 0 48v32a16 16 0 0 0 16 16h416a16 16 0 0 0 16-16V48a16 16 0 0 0-16-16zM53.200 467a48 48 0 0 0 47.900 45h245.800a48 48 0 0 0 47.900-45L416 128H32z"/></svg>
<svg style="position:absolute;left:2510.8px;top:902px;stroke:#7d7d7d" width="16" height="11" viewBox="0 0 16 11" ><path d="M2 2 L8 8 L14 2" fill="none" stroke-width="2.2" stroke-linecap="butt" stroke-linejoin="miter"/></svg>
<div style="position:absolute;left:250px;top:945px;width:2300px;height:82px;box-sizing:border-box;border-top:2px solid #232323;background:#181818"></div>
<div style="position:absolute;left:270px;top:962px;width:50px;height:50px;border-radius:5px;background:#781868"></div><div style="position:absolute;left:275.70px;top:976.15px;font-size:22.38px;line-height:1;font-weight:bold;color:#8a8b8b;white-space:nowrap;transform-origin:0 50%;transform:scaleX(0.8042);will-change:transform">UUC</div>
<div style="position:absolute;top:978.51px;font-size:17.3px;line-height:1;color:#6c6e73;white-space:nowrap;will-change:transform;letter-spacing:-0.064px;left:388.6px;">[UUC]</div>
<div style="position:absolute;top:978.15px;font-size:18px;line-height:1;color:#6c6e73;white-space:nowrap;will-change:transform;letter-spacing:0.327px;left:503.6px;">Underground Utility Contractors</div>
<svg style="position:absolute;left:2321px;top:975px" width="26" height="23" viewBox="0 0 26 23"><rect x="0" y="0" width="25.200" height="23" rx="4.500" fill="#393939"/><path d="M26 7.300 H19.600 L17.400 3.600 H8.600 L4 11.500 L8.600 19.400 H17.400 L19.600 15.700 H26 Z" fill="#181818"/><path d="M10.400 6.900 H15.400 L17.900 11.500 L15.400 16.100 H10.400 L7.900 11.500 Z" fill="#5c5c5c"/></svg>
<svg style="position:absolute;left:2377px;top:975px;" width="20" height="23" viewBox="0 0 448 512" fill="#66676b"><path d="M224 512c35.3 0 64-28.7 64-64H160c0 35.300 28.700 64 64 64zm215.400-149.700C420 341.500 383.800 310.200 383.800 208c0-77.700-54.500-139.900-127.900-155.200V32c0-17.700-14.300-32-32-32s-32 14.300-32 32v20.800C118.600 68.100 64.100 130.300 64.100 208c0 102.200-36.200 133.500-55.500 154.300-6 6.500-8.700 14.200-8.600 21.700.1 16.400 13 32 32.100 32h383.800c19.100 0 32-15.600 32.100-32 .1-7.500-2.600-15.200-8.600-21.700z"/></svg>
<svg style="position:absolute;left:2425.5px;top:975px;" width="23" height="23" viewBox="0 0 512 512" fill="#66676b"><path d="M497.900 142.100l-46.100 46.100c-4.700 4.700-12.300 4.700-17 0l-111-111c-4.700-4.700-4.700-12.300 0-17l46.100-46.100c18.700-18.700 49.100-18.700 67.900 0l60.100 60.100c18.800 18.700 18.800 49.100 0 67.900zM284.200 99.800L21.600 362.400.4 483.900c-2.900 16.400 11.400 30.600 27.800 27.800l121.500-21.300 262.600-262.600c4.700-4.700 4.700-12.300 0-17l-111-111c-4.800-4.700-12.400-4.700-17.100 0zM88 424h48v36.300l-64.500 11.300-31.100-31.100L51.700 376H88v48z"/></svg>
<svg style="position:absolute;left:2468px;top:974px;" width="20" height="24" viewBox="0 0 448 512" fill="#66676b"><path d="M432 32H312l-9.400-18.700A24 24 0 0 0 281.100 0H166.800a23.720 23.720 0 0 0-21.400 13.300L136 32H16A16 16 0 0 0 0 48v32a16 16 0 0 0 16 16h416a16 16 0 0 0 16-16V48a16 16 0 0 0-16-16zM53.200 467a48 48 0 0 0 47.900 45h245.800a48 48 0 0 0 47.900-45L416 128H32z"/></svg>
<svg style="position:absolute;left:2510.8px;top:982px;stroke:#7d7d7d" width="16" height="11" viewBox="0 0 16 11" ><path d="M2 2 L8 8 L14 2" fill="none" stroke-width="2.2" stroke-linecap="butt" stroke-linejoin="miter"/></svg>
<div style="position:absolute;left:250px;top:1142px;width:2300px;height:80px;box-sizing:border-box;border-top:2px solid #232323;background:#181818"></div>
<div style="position:absolute;left:270px;top:1159px;width:50px;height:50px;border-radius:5px;background:#1c651c"></div><div style="position:absolute;left:278.20px;top:1168.77px;font-size:31.11px;line-height:1;font-weight:bold;color:#8a8b8b;white-space:nowrap;transform-origin:0 50%;transform:scaleX(0.7568);will-change:transform">AH</div>
<div style="position:absolute;top:1175.51px;font-size:17.3px;line-height:1;color:#6c6e73;white-space:nowrap;will-change:transform;letter-spacing:0.284px;left:394.5px;">[AH]</div>
<div style="position:absolute;top:1175.15px;font-size:18px;line-height:1;color:#6c6e73;white-space:nowrap;will-change:transform;letter-spacing:0.138px;left:503.6px;">Alpha Hoisting</div>
<div style="position:absolute;top:1175.15px;font-size:18px;line-height:1;color:#6c6e73;white-space:nowrap;will-change:transform;letter-spacing:0.178px;left:1016.6px;">144 North Broadway Street, McArthur, Ohio 45698</div>
<svg style="position:absolute;left:2372px;top:1172px" width="26" height="23" viewBox="0 0 26 23"><rect x="0" y="0" width="25.200" height="23" rx="4.500" fill="#393939"/><path d="M26 7.300 H19.600 L17.400 3.600 H8.600 L4 11.500 L8.600 19.400 H17.400 L19.600 15.700 H26 Z" fill="#181818"/><path d="M10.400 6.900 H15.400 L17.900 11.500 L15.400 16.100 H10.400 L7.900 11.500 Z" fill="#5c5c5c"/></svg>
<svg style="position:absolute;left:2425.5px;top:1172px;" width="23" height="23" viewBox="0 0 512 512" fill="#66676b"><path d="M497.900 142.100l-46.100 46.100c-4.700 4.700-12.300 4.700-17 0l-111-111c-4.700-4.700-4.700-12.300 0-17l46.100-46.100c18.700-18.700 49.100-18.700 67.900 0l60.100 60.100c18.800 18.700 18.800 49.100 0 67.900zM284.200 99.800L21.600 362.400.4 483.900c-2.900 16.400 11.400 30.600 27.800 27.800l121.500-21.300 262.600-262.600c4.700-4.700 4.700-12.300 0-17l-111-111c-4.800-4.700-12.400-4.700-17.100 0zM88 424h48v36.300l-64.500 11.300-31.100-31.100L51.700 376H88v48z"/></svg>
<svg style="position:absolute;left:2468px;top:1171px;" width="20" height="24" viewBox="0 0 448 512" fill="#66676b"><path d="M432 32H312l-9.400-18.700A24 24 0 0 0 281.100 0H166.800a23.720 23.720 0 0 0-21.400 13.300L136 32H16A16 16 0 0 0 0 48v32a16 16 0 0 0 16 16h416a16 16 0 0 0 16-16V48a16 16 0 0 0-16-16zM53.200 467a48 48 0 0 0 47.900 45h245.800a48 48 0 0 0 47.900-45L416 128H32z"/></svg>
<svg style="position:absolute;left:2510.8px;top:1179px;stroke:#7d7d7d" width="16" height="11" viewBox="0 0 16 11" ><path d="M2 2 L8 8 L14 2" fill="none" stroke-width="2.2" stroke-linecap="butt" stroke-linejoin="miter"/></svg>
<div style="position:absolute;left:250px;top:1222px;width:2300px;height:80px;box-sizing:border-box;border-top:2px solid #232323;background:#181818"></div>
<div style="position:absolute;left:270px;top:1239px;width:50px;height:50px;border-radius:5px;background:#5e1428"></div><div style="position:absolute;left:278.45px;top:1248.77px;font-size:31.11px;line-height:1;font-weight:bold;color:#8a8b8b;white-space:nowrap;transform-origin:0 50%;transform:scaleX(0.7752);will-change:transform">BP</div>
<div style="position:absolute;top:1255.51px;font-size:17.3px;line-height:1;color:#6c6e73;white-space:nowrap;will-change:transform;letter-spacing:-0.066px;left:395.3px;">[BP]</div>
<div style="position:absolute;top:1255.15px;font-size:18px;line-height:1;color:#6c6e73;white-space:nowrap;will-change:transform;letter-spacing:-0.173px;left:503.6px;">Bravo Paving</div>
<div style="position:absolute;top:1255.15px;font-size:18px;line-height:1;color:#6c6e73;white-space:nowrap;will-change:transform;letter-spacing:0.081px;left:1016.6px;">661 North Broad Street, Canfield, Ohio 44406</div>
<svg style="position:absolute;left:2372px;top:1252px" width="26" height="23" viewBox="0 0 26 23"><rect x="0" y="0" width="25.200" height="23" rx="4.500" fill="#393939"/><path d="M26 7.300 H19.600 L17.400 3.600 H8.600 L4 11.500 L8.600 19.400 H17.400 L19.600 15.700 H26 Z" fill="#181818"/><path d="M10.400 6.900 H15.400 L17.900 11.500 L15.400 16.100 H10.400 L7.900 11.500 Z" fill="#5c5c5c"/></svg>
<svg style="position:absolute;left:2425.5px;top:1252px;" width="23" height="23" viewBox="0 0 512 512" fill="#66676b"><path d="M497.900 142.100l-46.100 46.100c-4.700 4.700-12.300 4.700-17 0l-111-111c-4.700-4.700-4.700-12.300 0-17l46.100-46.100c18.700-18.700 49.100-18.700 67.900 0l60.100 60.100c18.800 18.700 18.800 49.100 0 67.900zM284.200 99.800L21.600 362.400.4 483.900c-2.900 16.400 11.400 30.600 27.800 27.800l121.500-21.300 262.600-262.600c4.700-4.700 4.700-12.300 0-17l-111-111c-4.800-4.700-12.400-4.700-17.100 0zM88 424h48v36.300l-64.500 11.300-31.100-31.100L51.700 376H88v48z"/></svg>
<svg style="position:absolute;left:2468px;top:1251px;" width="20" height="24" viewBox="0 0 448 512" fill="#66676b"><path d="M432 32H312l-9.400-18.700A24 24 0 0 0 281.100 0H166.800a23.720 23.720 0 0 0-21.400 13.300L136 32H16A16 16 0 0 0 0 48v32a16 16 0 0 0 16 16h416a16 16 0 0 0 16-16V48a16 16 0 0 0-16-16zM53.200 467a48 48 0 0 0 47.900 45h245.800a48 48 0 0 0 47.900-45L416 128H32z"/></svg>
<svg style="position:absolute;left:2510.8px;top:1259px;stroke:#7d7d7d" width="16" height="11" viewBox="0 0 16 11" ><path d="M2 2 L8 8 L14 2" fill="none" stroke-width="2.2" stroke-linecap="butt" stroke-linejoin="miter"/></svg>
<div style="position:absolute;left:250px;top:1302px;width:2300px;height:80px;box-sizing:border-box;border-top:2px solid #232323;background:#181818"></div>
<div style="position:absolute;left:270px;top:1319px;width:50px;height:50px;border-radius:5px;background:#858585"></div>
<svg style="position:absolute;left:2510.8px;top:1339px;stroke:#7d7d7d" width="16" height="11" viewBox="0 0 16 11" ><path d="M2 2 L8 8 L14 2" fill="none" stroke-width="2.2" stroke-linecap="butt" stroke-linejoin="miter"/></svg>
<div style="position:absolute;left:945px;top:429px;width:670px;height:463px;border-radius:5px;background:#4d4d4d;box-shadow:0 11px 15px -7px rgba(0,0,0,.2),0 24px 38px 3px rgba(0,0,0,.14),0 9px 46px 8px rgba(0,0,0,.12)"></div>
<div style="position:absolute;top:458.14px;font-size:25.8px;line-height:1;color:#ffffff;white-space:nowrap;will-change:transform;letter-spacing:-0.105px;left:975.8px;-webkit-text-stroke:0.35px #fff;">Manage Delivery Leads for Sparky Electrical</div>
<div style="position:absolute;top:513.90px;font-size:18.5px;line-height:1;color:#d2d2d2;white-space:nowrap;will-change:transform;letter-spacing:-0.115px;left:975.3px;-webkit-text-stroke:0.25px #d2d2d2;">Users that will be notified when deliveries are assigned to Sparky Electrical.</div>
<div style="position:absolute;top:539.26px;font-size:15.4px;line-height:1;color:#d2d2d2;white-space:nowrap;will-change:transform;font-style:italic;letter-spacing:0.07px;left:976.07px;">At least one user must be selected.</div>
<svg style="position:absolute;left:975px;top:574.0px" width="20" height="20" viewBox="0 0 20 20"><rect x="1" y="1" width="18" height="18" rx="2.500" fill="#ffa008"/><rect x="5.500" y="9" width="9" height="2" fill="#4d4d4d"/></svg>
<div style="position:absolute;top:574.00px;font-size:20.5px;line-height:1;color:#dadada;white-space:nowrap;will-change:transform;font-style:italic;letter-spacing:-0.12px;left:1010.62px;-webkit-text-stroke:0.25px #dadada;">All Builders Plus Leads</div>
<svg style="position:absolute;left:975px;top:616.45px" width="20" height="20" viewBox="0 0 20 20"><circle cx="10" cy="10" r="10" fill="#ffa008"/><path d="M5.800 10.300l2.900 2.900 5.600-5.800" fill="none" stroke="#4d4d4d" stroke-width="2.200"/></svg>
<div style="position:absolute;top:616.45px;font-size:20.5px;line-height:1;color:#dadada;white-space:nowrap;will-change:transform;letter-spacing:-0.229px;left:1009.6px;-webkit-text-stroke:0.25px #dadada;">Chris Callen</div>
<svg style="position:absolute;left:975px;top:658.9px" width="20" height="20" viewBox="0 0 20 20"><circle cx="10" cy="10" r="9" fill="none" stroke="#e0e0e0" stroke-width="1.700"/></svg>
<div style="position:absolute;top:658.90px;font-size:20.5px;line-height:1;color:#dadada;white-space:nowrap;will-change:transform;letter-spacing:0.133px;left:1009.6px;-webkit-text-stroke:0.25px #dadada;">Nick Dreiling</div>
<svg style="position:absolute;left:975px;top:701.35px" width="20" height="20" viewBox="0 0 20 20"><circle cx="10" cy="10" r="9" fill="none" stroke="#e0e0e0" stroke-width="1.700"/></svg>
<div style="position:absolute;top:701.35px;font-size:20.5px;line-height:1;color:#dadada;white-space:nowrap;will-change:transform;letter-spacing:0.19px;left:1009.6px;-webkit-text-stroke:0.25px #dadada;">Andrew Potvin</div>
<svg style="position:absolute;left:975px;top:743.8px" width="20" height="20" viewBox="0 0 20 20"><circle cx="10" cy="10" r="10" fill="#ffa008"/><path d="M5.800 10.300l2.900 2.900 5.600-5.800" fill="none" stroke="#4d4d4d" stroke-width="2.200"/></svg>
<div style="position:absolute;top:743.80px;font-size:20.5px;line-height:1;color:#dadada;white-space:nowrap;will-change:transform;letter-spacing:-0.35px;left:1009.6px;-webkit-text-stroke:0.25px #dadada;">Eric Biven</div>
<svg style="position:absolute;left:975px;top:786.25px" width="20" height="20" viewBox="0 0 20 20"><circle cx="10" cy="10" r="10" fill="#ffa008"/><path d="M5.800 10.300l2.900 2.900 5.600-5.800" fill="none" stroke="#4d4d4d" stroke-width="2.200"/></svg>
<div style="position:absolute;top:786.25px;font-size:20.5px;line-height:1;color:#dadada;white-space:nowrap;will-change:transform;letter-spacing:0.075px;left:1009.6px;-webkit-text-stroke:0.25px #dadada;">Clinton Gray</div>
<div style="position:absolute;left:1493px;top:852px;width:58px;height:31px;box-sizing:border-box;border:1.300px solid #c0c4cc;border-radius:4.500px;background:#212121"></div>
<div style="position:absolute;top:859.97px;font-size:13.4px;line-height:1;color:#c8ccd4;white-space:nowrap;will-change:transform;font-weight:bold;letter-spacing:0.11px;left:1498.7px;">Cancel</div>
<div style="position:absolute;left:1561px;top:852px;width:44px;height:31px;border-radius:4.500px;background:#ffa008"></div>
<div style="position:absolute;top:859.87px;font-size:13.6px;line-height:1;color:#2c2a30;white-space:nowrap;will-change:transform;letter-spacing:-0.269px;left:1567.0px;">Save</div>
<svg style="position:absolute;left:2080px;top:370px" width="320" height="320" viewBox="2080 370 320 320"><path d="M2128 407.500 L2318 599.400" stroke="#62c546" stroke-width="37.700" stroke-linecap="round" fill="none"/><path d="M2320.450 521.300 L2360.600 642.300 L2240.100 601.200 L2289.950 607.700 L2326.500 571.200 Z" fill="#62c546" stroke="#62c546" stroke-width="18" stroke-linejoin="round"/></svg>
</div><div style="position:absolute;left:0;top:-3px;width:2560px;height:1325px;box-sizing:border-box;border:1px solid #4a4a4a;border-right-color:#444;border-radius:0 0 17px 17px;pointer-events:none"></div>
</body></html>
